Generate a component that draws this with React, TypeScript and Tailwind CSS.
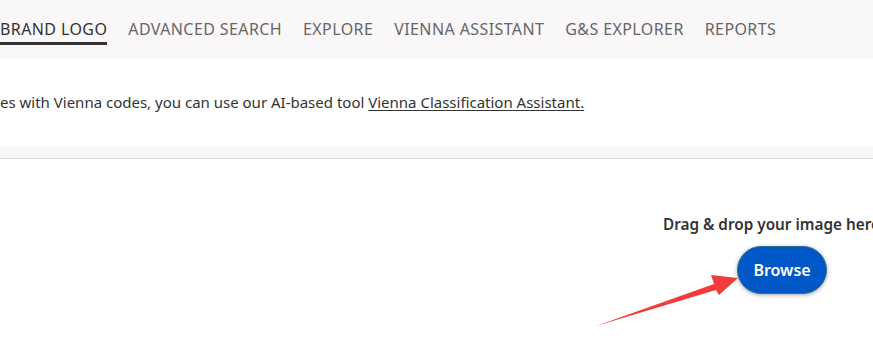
export default function App() {
  const nav = ['BRAND LOGO', 'ADVANCED SEARCH', 'EXPLORE', 'VIENNA ASSISTANT', 'G&S EXPLORER', 'REPORTS']

  return (
    <div className="w-[873px] h-[342px] overflow-hidden bg-white font-['Noto_Sans',sans-serif] relative">
      <div className="h-[59px] bg-[#f9f7f8] flex items-start pt-[18px] gap-[21px] whitespace-nowrap">
        {nav.map((item, i) => (
          <div
            key={item}
            className={
              i === 0
                ? 'text-[16px] tracking-[0.4px] text-[#333] pb-[2px] border-b-[3px] border-[#333] leading-[22px]'
                : 'text-[16px] tracking-[0.4px] text-[#666] leading-[22px]'
            }
          >
            {item}
          </div>
        ))}
      </div>

      <div className="h-[88px] flex items-center pb-[2px]">
        <p className="text-[15px] text-[#333] whitespace-nowrap">
          es with Vienna codes, you can use our AI-based tool{' '}
          <span className="underline underline-offset-2">Vienna Classification Assistant.</span>
        </p>
      </div>

      <div className="h-[12px] bg-[#f7f7f5] border-b border-[#d9d9d9]" />

      <div className="flex pt-[54px] pl-[663px]">
        <div className="w-[238px] flex flex-col items-center shrink-0">
          <p className="text-[15.3px] font-semibold text-[#333] whitespace-nowrap leading-[22px] self-start">
            Drag &amp; drop your image here
          </p>
          <button className="mt-[11px] w-[90px] h-[48px] rounded-full bg-[#0057c8] text-white text-[16px] font-semibold shadow-[0_1px_4px_rgba(0,0,0,0.35)] border border-[#2f6f8f]">
            Browse
          </button>
        </div>
      </div>

      <svg className="absolute left-0 top-0 pointer-events-none" width="873" height="342">
        <polygon points="596,326 714,284 711,275 738,278 719,295 716,290" fill="#f23b3b" />
      </svg>
    </div>
  )
}
